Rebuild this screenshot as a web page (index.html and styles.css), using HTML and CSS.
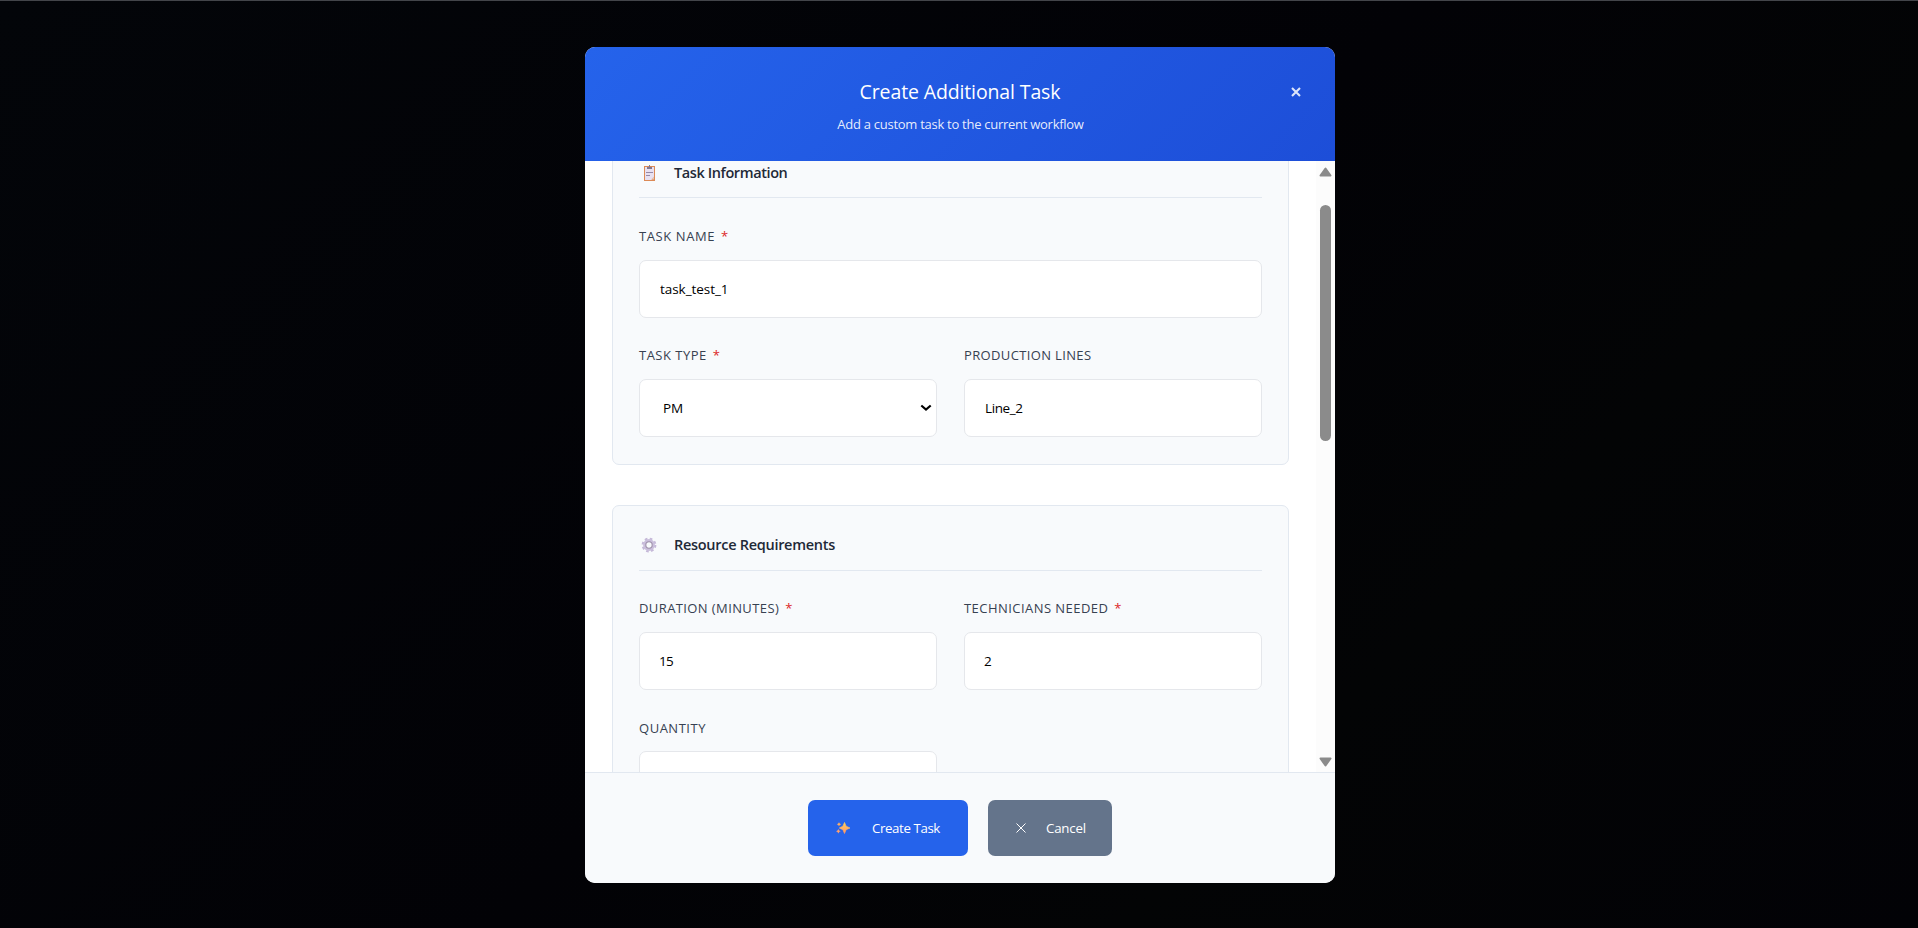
FILE: index.html
```html
<!DOCTYPE html>
<html lang="en">
<head>
<meta charset="utf-8">
<title>Create Additional Task</title>
<link rel="stylesheet" href="styles.css">
</head>
<body>
<div class="overlay">
  <div class="modal">
    <header class="modal-header">
      <h1 class="modal-title">Create Additional Task</h1>
      <p class="modal-subtitle">Add a custom task to the current workflow</p>
      <button class="close" aria-label="Close"><svg width="10" height="10" viewBox="0 0 10 10"><path d="M1 1l8 8M9 1l-8 8" stroke="currentColor" stroke-width="2.100" fill="none"/></svg></button>
    </header>

    <div class="modal-body">
      <div class="sections">
        <section class="section section-first">
          <h2 class="section-title">
            <svg class="section-icon" width="20" height="20" viewBox="0 0 20 20">
              <rect x="5" y="3" width="11" height="15" fill="#dc8a56"/>
              <path d="M6 4h9v10l-2.500 3H6z" fill="#e8e0f1"/>
              <path d="M15 13.500v3h-3z" fill="#e6c4b4"/>
              <rect x="8" y="4" width="5" height="2" fill="#84788f"/>
              <rect x="10" y="2" width="1" height="2" fill="#84788f"/>
              <path d="M7 9.500h7M7 12.500h4" stroke="#9689a8" stroke-width="1"/>
            </svg>
            <span class="t-info">Task Information</span>
          </h2>
          <div class="grid">
            <div class="field wide">
              <label class="label"><span class="t-name">TASK NAME</span><span class="req">*</span></label>
              <input class="control t-test" value="task_test_1">
            </div>
            <div class="field">
              <label class="label"><span class="t-type">TASK TYPE</span><span class="req">*</span></label>
              <div class="control select"><span>PM</span><svg width="12" height="8" viewBox="0 0 12 8"><path d="M1.300 1.500L6 5.500l4.700-4" stroke="#000" stroke-width="2.200" fill="none"/></svg></div>
            </div>
            <div class="field">
              <label class="label"><span class="t-lines">PRODUCTION LINES</span></label>
              <input class="control t-line" value="Line_2">
            </div>
          </div>
        </section>

        <section class="section section-second">
          <h2 class="section-title">
            <svg class="section-icon" width="20" height="20" viewBox="0 0 20 20">
              <circle cx="10" cy="10" r="6.300" fill="none" stroke="#c5b8d8" stroke-width="2.200" stroke-dasharray="2.600 2.350"/>
              <circle cx="10" cy="10" r="4.600" fill="none" stroke="#cabfdc" stroke-width="2.600"/>
              <circle cx="10" cy="10" r="3.200" fill="none" stroke="#9d8fa9" stroke-width="1.100"/>
            </svg>
            <span class="t-res">Resource Requirements</span>
          </h2>
          <div class="grid">
            <div class="field">
              <label class="label"><span class="t-dur">DURATION (MINUTES)</span><span class="req">*</span></label>
              <input class="control t-num" value="15">
            </div>
            <div class="field">
              <label class="label"><span class="t-tech">TECHNICIANS NEEDED</span><span class="req">*</span></label>
              <input class="control t-num" value="2">
            </div>
            <div class="field">
              <label class="label label-low"><span class="t-qty">QUANTITY</span></label>
              <input class="control" value="">
            </div>
          </div>
        </section>
      </div>
      <div class="scrollbar">
        <svg width="13" height="10" viewBox="0 0 13 10"><path d="M6.500 1.500L11.500 8.500H1.500z" fill="#8b8b8b" stroke="#8b8b8b" stroke-width="2" stroke-linejoin="round"/></svg>
        <div class="thumb"></div>
        <svg class="down" width="13" height="10" viewBox="0 0 13 10"><path d="M6.500 8.500L11.500 1.500H1.500z" fill="#8b8b8b" stroke="#8b8b8b" stroke-width="2" stroke-linejoin="round"/></svg>
      </div>
    </div>

    <footer class="modal-footer">
      <button class="btn btn-primary">
        <svg width="14" height="12" viewBox="0 0 14 12">
          <defs><linearGradient id="spark" x1="0" y1="0" x2="0" y2="1"><stop offset="0" stop-color="#ffd05a"/><stop offset="1" stop-color="#ff9468"/></linearGradient></defs>
          <path d="M8.500 0.500L10.100 4.200L14 6L10.100 7.700L8.500 11.500L6.900 7.700L3.300 6L6.900 4.200z" fill="url(#spark)" stroke="url(#spark)" stroke-width=".7"/>
          <path d="M3 .3l.8 1.300 1.400.7-1.400.7L3 4.300l-.8-1.300L.8 2.300l1.400-.7z" fill="#ffae62"/>
          <path d="M2.300 7.100l.9 1.500 1.500.7-1.500.8-.9 1.500-.8-1.500L0 9.300l1.500-.7z" fill="#ffa070"/>
        </svg>
        <span class="t-create">Create Task</span>
      </button>
      <button class="btn btn-secondary">
        <svg width="10" height="10" viewBox="0 0 10 10"><path d="M.5.5l9 9M9.500.5l-9 9" stroke="#fff" stroke-width="1" fill="none"/></svg>
        <span class="t-cancel">Cancel</span>
      </button>
    </footer>
  </div>
</div>
</body>
</html>
```
FILE: styles.css
```css
* { box-sizing: border-box; }
body {
  margin: 0;
  font-family: "Open Sans", "Noto Sans", sans-serif;
}
.overlay {
  height: 928px;
  padding-top: 46px;
  border-top: 1px solid #43454a;
  background: linear-gradient(135deg, #030509 0%, #020206 50%, #030405 72%, #020206 100%);
  overflow: hidden;
}
.modal {
  display: flex;
  flex-direction: column;
  width: 750px;
  height: 836px;
  margin-left: 585px;
  border-radius: 10px;
  background: #fff;
  overflow: hidden;
}
.modal-header {
  position: relative;
  flex: none;
  height: 114px;
  padding-top: 31px;
  background: linear-gradient(135deg, #2563eb 0%, #1d4ed8 100%);
  color: #fff;
  text-align: center;
}
.modal-title {
  margin: 0;
  font-size: 19.5px;
  font-weight: 500;
  line-height: 28px;
  letter-spacing: -0.13px;
}
.modal-subtitle {
  margin: 8px 0 0 1px;
  font-size: 13px;
  line-height: 20px;
  letter-spacing: -0.27px;
  color: rgba(255, 255, 255, .9);
}
.close {
  position: absolute;
  top: 40px;
  right: 34.5px;
  display: flex;
  padding: 0;
  border: 0;
  background: none;
  color: rgba(255, 255, 255, .85);
}
.modal-body {
  flex: 1;
  display: flex;
  min-height: 0;
  overflow: hidden;
}
.sections {
  flex: 1;
  margin-top: -29px;
  padding: 0 27px;
}
.section {
  height: 420px;
  margin-bottom: 40px;
  padding: 26px;
  border: 1px solid #e2e8f0;
  border-radius: 7px;
  background: #f8fafc;
}
.section-first { height: 333px; }
.section-title {
  display: flex;
  align-items: center;
  gap: 15px;
  height: 39px;
  margin: 0 0 27px;
  padding-bottom: 12px;
  border-bottom: 1px solid #e2e8f0;
  color: #1f2937;
  font-size: 14.5px;
  font-weight: 600;
  line-height: 26px;
}
.section-first .section-title { margin-bottom: 28px; padding-bottom: 10px; }
.section-icon { flex: none; }
.grid {
  display: grid;
  grid-template-columns: 1fr 1fr;
  gap: 27px;
}
.wide { grid-column: span 2; }
.field {
  display: flex;
  flex-direction: column;
  gap: 14px;
  min-width: 0;
}
.label {
  display: flex;
  gap: 6px;
  height: 20px;
  color: #374151;
  font-size: 13px;
  line-height: 20px;
  white-space: nowrap;
}
.label-low { padding-top: 1px; }
.req { color: #dc2626; }
.control {
  width: 100%;
  height: 58px;
  padding: 0 20px 1px;
  border: 1px solid #e5e7eb;
  border-radius: 7px;
  background: #fff;
  color: #000;
  font-family: inherit;
  font-size: 13.5px;
}
.select {
  display: flex;
  align-items: center;
  justify-content: space-between;
  padding: 0 4px 1px 23px;
}
.scrollbar {
  display: flex;
  flex-direction: column;
  align-items: center;
  width: 19px;
  padding: 6px 0 5px;
  background: #fcfcfc;
}
.thumb {
  width: 11px;
  height: 236px;
  margin-top: 28px;
  border-radius: 6px;
  background: #8b8b8b;
}
.down { margin-top: auto; }
.modal-footer {
  flex: none;
  display: flex;
  justify-content: center;
  gap: 20px;
  height: 111px;
  padding-top: 27px;
  border-top: 1px solid #e2e8f0;
  background: #f8fafc;
}
.btn {
  display: flex;
  align-items: center;
  height: 56px;
  padding: 0 0 0 28px;
  border: 0;
  border-radius: 7px;
  color: #fff;
  font-family: inherit;
  font-size: 13.3px;
  white-space: nowrap;
}
.btn-primary { width: 160px; gap: 22px; background: #2563eb; }
.btn-secondary { width: 124px; gap: 20px; background: #64748b; }
.t-info { letter-spacing: -0.4px; }
.t-res { letter-spacing: -0.29px; }
.t-name { letter-spacing: 0.59px; }
.t-type { letter-spacing: 0.49px; }
.t-lines { letter-spacing: 0.36px; }
.t-dur { letter-spacing: 0.4px; }
.t-tech { letter-spacing: 0.45px; }
.t-qty { letter-spacing: 0.52px; }
.t-test { letter-spacing: -0.05px; }
.t-line { letter-spacing: -0.38px; }
.t-num { letter-spacing: -0.7px; padding-left: 19px; }
.t-create { letter-spacing: -0.4px; }
.t-cancel { letter-spacing: -0.2px; }
```
